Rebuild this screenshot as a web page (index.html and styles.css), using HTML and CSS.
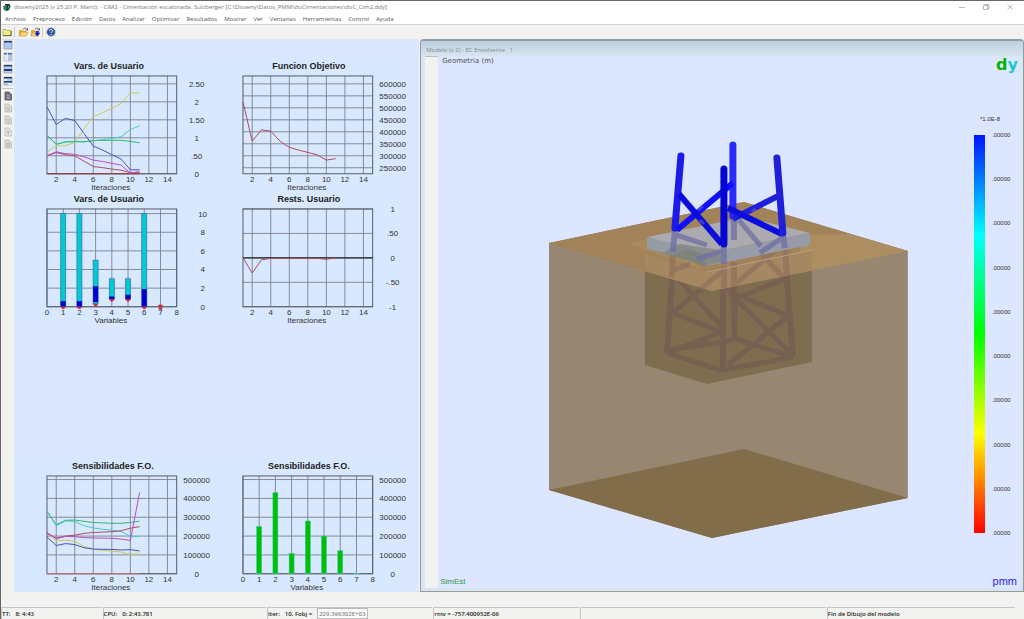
FILE: index.html
```html
<!DOCTYPE html>
<html lang="es">
  <head>
    <meta charset="UTF-8" />
    <meta name="viewport" content="width=device-width, initial-scale=1.0" />
    <title>disseny2025 - CIM2</title>
    <link rel="stylesheet" href="styles.css">
  </head>
  <body>
    <header class="title-bar">
      <svg class="app-icon" viewBox="0 0 10 10">
        <path d="M3 1l5 0 1 3-2 4-3 1-2-3z" fill="#234" />
        <path d="M1 4l3-2 1 4-2 3-2-2z" fill="#1a9a50" />
        <path d="M6 3l2 0-1 4z" fill="#3ac6a0" />
        <path d="M0 4l2-1 0 2z" fill="#d33" />
      </svg>
      <span class="title-text">disseny2025 (v 25.20 P. Martí): - CIM2 - Cimentación escalonada. Sulzberger [C:\Disseny\Datos_PMM\doCimentaciones\doC_Cim2.ddy]</span>
      <div class="window-controls">
        <button type="button" aria-label="Minimizar">
          <svg viewBox="0 0 8 8"><path d="M1 4.5h6" /></svg>
        </button>
        <button type="button" aria-label="Restaurar">
          <svg viewBox="0 0 8 8"><path d="M1.5 2.5h4v4h-4zM3 2.5v-1h4v4h-1.500" /></svg>
        </button>
        <button type="button" aria-label="Cerrar">
          <svg viewBox="0 0 8 8"><path d="M1.500 1.500l5 5M6.500 1.500l-5 5" /></svg>
        </button>
      </div>
    </header>

    <nav class="menu-bar">
      <button type="button">Archivo</button>
      <button type="button">Preproceso</button>
      <button type="button">Edición</button>
      <button type="button">Datos</button>
      <button type="button">Analizar</button>
      <button type="button">Optimizar</button>
      <button type="button">Resultados</button>
      <button type="button">Mostrar</button>
      <button type="button">Ver</button>
      <button type="button">Ventanas</button>
      <button type="button">Herramientas</button>
      <button type="button">Control</button>
      <button type="button">Ayuda</button>
    </nav>

    <div class="toolbar">
      <button type="button" aria-label="Nuevo">
        <svg viewBox="0 0 10 10">
          <path d="M1 2.500h3l1 1h4v5H1z" fill="#f3ee7c" stroke="#99964e" stroke-width=".7" />
          <path d="M1 8.700h8.300V4" fill="none" stroke="#444" stroke-width=".7" />
        </svg>
      </button>
      <span class="separator"></span>
      <button type="button" aria-label="Abrir">
        <svg viewBox="0 0 10 10">
          <path d="M1 3h3l1 1h3v5H1z" fill="#e8a93a" />
          <path d="M1 9l2-4h7L8 9z" fill="#ffd76a" stroke="#a87a25" stroke-width=".5" />
          <path d="M5 2.500c1-2 3-1.500 3.500 0M9.500 1v2H7.500" fill="none" stroke="#555" stroke-width=".9" />
        </svg>
      </button>
      <button type="button" aria-label="Guardar">
        <svg viewBox="0 0 10 10">
          <path d="M1 3h3l1 1h3v5H1z" fill="#e8a93a" />
          <path d="M1 9l2-4h7L8 9z" fill="#ffd76a" stroke="#a87a25" stroke-width=".5" />
          <path d="M5 2.500c1-2 3-1.500 3.500 0M9.500 1v2H7.500" fill="none" stroke="#555" stroke-width=".9" />
          <path d="M6 4h2.500v2H10L7.200 9.500 4.500 6H6z" fill="#1420e0" />
        </svg>
      </button>
      <span class="separator"></span>
      <button type="button" aria-label="Ayuda">
        <svg viewBox="0 0 10 10">
          <circle cx="5" cy="5" r="4.300" fill="#2f5596" stroke="#a9b7d0" stroke-width=".7" />
          <path d="M3.500 4c0-2 3-2 3 0 0 1-1.500 1-1.500 2M5 7v1" fill="none" stroke="#fff" />
        </svg>
      </button>
    </div>

    <main class="workspace">
      <div class="side-tools">
        <button type="button" aria-label="Una ventana">
          <svg viewBox="0 0 10 10"><path d="M1 1h8v8H1z" fill="#a9c8f3" stroke="#889" stroke-width=".6" /><path d="M1 1h8v1.500H1z" fill="#1f3f78" /></svg>
        </button>
        <button type="button" aria-label="Mosaico vertical">
          <svg viewBox="0 0 10 10"><path d="M1 1h8v8H1z" fill="#e9eaec" stroke="#aaa" stroke-width=".6" /><path d="M5 2h4v7H5z" fill="#a9c8f3" /><path d="M1 1h3v1.500H1zM5 1h4v1.500H5z" fill="#54719f" /></svg>
        </button>
        <button type="button" aria-label="Mosaico horizontal">
          <svg viewBox="0 0 10 10"><path d="M1 1h8v8H1z" fill="#b7d2f5" stroke="#889" stroke-width=".6" /><path d="M1 1h8v1.500H1zM1 5h8v2H1z" fill="#1f3f68" /></svg>
        </button>
        <button type="button" aria-label="Cascada">
          <svg viewBox="0 0 10 10"><path d="M1 1h8v8H1z" fill="#b7d2f5" stroke="#889" stroke-width=".6" /><path d="M1 1h8v1.500H1zM1 5h8v1.500H1z" fill="#1f3f68" /><path d="M1 3h3v2H1zM5 7h4v2H5z" fill="#eef" /></svg>
        </button>
        <span class="rule"></span>
        <button type="button" aria-label="Copiar">
          <svg viewBox="0 0 10 10"><path d="M2 1h4l2.500 2.500V9H2z" fill="#777385" stroke="#444" stroke-width=".7" /><path d="M3.500 4.500h3M3.500 6h3.500M3.500 7.500h3.500" stroke="#c5c3d0" stroke-width=".6" /></svg>
        </button>
        <button type="button" aria-label="Informe" disabled>
          <svg viewBox="0 0 10 10"><path d="M2 1h4l2.500 2.500V9H2z" fill="#dcdcda" stroke="#aaa" stroke-width=".6" /><path d="M3.500 4.500h3M3.500 6h3.500M3.500 7.500h3.500" stroke="#aaa" stroke-width=".6" /></svg>
        </button>
        <button type="button" aria-label="Lista" disabled>
          <svg viewBox="0 0 10 10"><path d="M2 1h4l2.500 2.500V9H2z" fill="#dcdcda" stroke="#aaa" stroke-width=".6" /><path d="M3.500 4.500h3M3.500 6h3.500M3.500 7.500h3.500" stroke="#aaa" stroke-width=".6" /></svg>
        </button>
        <button type="button" aria-label="Exportar" disabled>
          <svg viewBox="0 0 10 10"><path d="M2 1h4l2.500 2.500V9H2z" fill="#e6e6e4" stroke="#aaa" stroke-width=".6" /><path d="M5.200 8V4M3.700 5.200L5.200 3.700l1.500 1.500" fill="none" stroke="#999" stroke-width=".7" /></svg>
        </button>
        <button type="button" aria-label="Configurar" disabled>
          <svg viewBox="0 0 10 10"><path d="M2 1h4l2.500 2.500V9H2z" fill="#dcdcda" stroke="#aaa" stroke-width=".6" /><circle cx="5.200" cy="5.800" r="1.500" fill="none" stroke="#999" stroke-width=".8" /></svg>
        </button>
      </div>

      <section class="charts-pane">
        <div class="chart-group">
          <svg class="chart" id="userVarsHistory"></svg>
          <svg class="chart" id="objective"></svg>
          <svg class="chart" id="userVarsBars"></svg>
          <svg class="chart" id="constraints"></svg>
        </div>
        <div class="chart-group">
          <svg class="chart" id="sensHistory"></svg>
          <svg class="chart" id="sensBars"></svg>
        </div>
      </section>

      <section class="model-window">
        <h2 class="model-title">Modelo (v 2) - EC Envolvente &nbsp;&nbsp;1</h2>
        <div class="model-body">
          <div class="model-gutter"></div>
          <div class="stage">
            <div class="stage-top">
              <span class="caption">Geometria (m)</span>
              <span class="logo">d<span>y</span></span>
            </div>
            <div class="stage-middle">
              <svg class="model" viewBox="438 76 520 496" role="img" aria-label="Cimentación escalonada">
                <!-- terrain block -->
                <path d="M549 243L744 202 908 251V498L712 538 549 490z" fill="#978672" />
                <path d="M549 490L744 449 908 498 712 538z" fill="#826d4a" />
                <!-- buried footing -->
                <path d="M645 265H812V362L707 384 645 365z" fill="#7e6d4f" />
                <g class="buried">
                  <path class="leg" d="M673 270L667 353M723 280V370M734 280L735 337M786 265L793 355" />
                  <path d="M673 273L722 327M673 312L722 273M673 313L722 332M667 353L722 332M667 353L723 371M670 350L733 340" />
                  <path d="M733 338L793 357M723 370L793 357M728 365L787 317M730 293L790 352M730 292L787 315M740 297L787 278M727 290L760 262" />
                </g>
                <!-- ground surface -->
                <path d="M549 243L744 202 908 251 712 291z" fill="#a18259" />
                <path d="M800 235L850 234 908 251 800 273z" fill="#ad8e60" />
                <path d="M628 244L665 234 705 272 690 265z" fill="#a88a5c" />
                <path d="M645 254L707 273 812 250V270L712 291 645 271z" fill="#a58761" />
                <g class="surface-shadow">
                  <path class="leg" d="M673 254L672 277M724 266V288M734 262V286M785 245L787 275" />
                  <path d="M673 270L690 264M700 289L722 272M737 283L787 240M760 252L783 277" />
                </g>
                <path d="M707 272L812 250" stroke="#b8a28a" stroke-width="1" />
                <!-- slab -->
                <path d="M647 237L747 217 810 233 704 254z" fill="#abaaae" />
                <path d="M647 237L704 254 707 266 647 249z" fill="#828780" />
                <path d="M647 237L690 248 675 255 647 249z" fill="#949da4" />
                <path d="M704 254L810 233V245L707 266z" fill="#989ba8" />
                <path d="M664 252L680 244 720 250 722 262 704 266z" fill="#7d827e" opacity=".7" />
                <g class="slab-shadow">
                  <path class="leg" d="M675 230L673 252M724 246V264M734 218V240M783 234L785 248" />
                  <path d="M677 235L707 245M697 259L722 251M739 220L761 246M760 253L785 236" />
                </g>
                <!-- jacket above ground -->
                <path class="tube back" d="M733 145V216" />
                <path class="tube left" d="M681 156L675 228" />
                <path class="brace light" d="M677 230L733 183" />
                <path class="brace dark" d="M679 194L722 244" />
                <path class="brace right" d="M778 196L733 219" />
                <path class="brace dark" d="M728 208L782 234" />
                <path class="tube right" d="M777 158L783 233" />
                <path class="tube front" d="M724 169V244" />
                <path d="M698 210l5-4M700 220l4 4M752 211l4-2" stroke="#6a6ad2" stroke-width="3" opacity=".5" />
              </svg>
              <div class="legend">
                <div class="legend-title">*1.0E-8</div>
                <div class="legend-scale">
                  <div class="legend-bar"></div>
                  <div class="legend-values">
                    <span>.00000</span>
                    <span>.00000</span>
                    <span>.00000</span>
                    <span>.00000</span>
                    <span>.00000</span>
                    <span>.00000</span>
                    <span>.00000</span>
                    <span>.00000</span>
                    <span>.00000</span>
                    <span>.00000</span>
                  </div>
                </div>
              </div>
            </div>
            <div class="stage-bottom">
              <span class="simest">SimEst</span>
              <span class="pmm">pmm</span>
            </div>
          </div>
        </div>
      </section>
    </main>

    <footer class="status-bar">
      <div class="status-cell"><span>TT:</span><span>8: 4:43</span></div>
      <div class="status-cell"><span>CPU:</span><span>0: 2:43.781</span></div>
      <div class="status-cell"><span>Iter:</span><span>10, Fobj =</span><output>229.396302E+03</output></div>
      <div class="status-cell">rmv = -757.400952E-06</div>
      <div class="status-cell"></div>
      <div class="status-cell">Fin de Dibujo del modelo</div>
    </footer>

    <script>
      // Plot frame inside each chart's viewBox
      const FRAME = { left: 19, top: 19, width: 130, height: 98 };

      const COLORS = {
        blue: "#4a50b4",
        yellow: "#c9cb58",
        cyan: "#45cbd0",
        green: "#35b865",
        magenta: "#bd4cc4",
        red: "#b04a5c",
      };

      function drawChart(id, cfg) {
        const svg = document.getElementById(id);
        const right = FRAME.left + FRAME.width;
        const bottom = FRAME.top + FRAME.height;
        const titleX = cfg.titleX || 85;
        const labelX = cfg.labelX || 169;
        const px = (x) =>
          FRAME.left + ((x - cfg.xMin) / (cfg.xMax - cfg.xMin)) * FRAME.width;
        const py = (y) =>
          bottom - ((y - cfg.yMin) / (cfg.yMax - cfg.yMin)) * FRAME.height;
        const rect = (x, lo, hi, w, cls) =>
          `<rect class="${cls}" x="${px(x) - w / 2}" y="${py(hi)}" width="${w}" height="${py(lo) - py(hi)}" />`;

        let out = `<text class="chart-title" x="${titleX}" y="12">${cfg.title}</text>`;

        // Grid and axis labels
        cfg.xTicks.forEach((x) => {
          out += `<path class="grid" d="M${px(x)} ${FRAME.top}V${bottom}" />`;
          out += `<text x="${px(x)}" y="${bottom + 8}">${x}</text>`;
        });
        cfg.yTicks.forEach(([y, label]) => {
          out += `<path class="grid" d="M${FRAME.left} ${py(y)}H${right}" />`;
          out += `<text x="${labelX}" y="${py(y) + 3}">${label}</text>`;
        });
        out += `<rect class="frame" x="${FRAME.left}" y="${FRAME.top}" width="${FRAME.width}" height="${FRAME.height}" />`;
        out += `<text x="83" y="${bottom + 16}">${cfg.xLabel}</text>`;
        if (cfg.zeroLine) {
          out += `<path class="zero" d="M${FRAME.left} ${py(0)}H${right}" />`;
        }

        // Iteration histories start at iteration 1
        (cfg.series || []).forEach(([color, values]) => {
          const points = values.map((v, i) => `${px(i + 1)},${py(v)}`).join(" ");
          out += `<polyline points="${points}" stroke="${COLORS[color] || color}" />`;
        });

        // Ranges: variable, lower bound, upper bound, start and end of current value
        (cfg.ranges || []).forEach(([x, lo, hi, from, to]) => {
          if (hi > lo) {
            out += rect(x, lo, hi, 5, "range");
            out += rect(x, from, to, 5, "value");
          }
          const y = py(lo);
          out += `<path class="mark" d="M${px(x) - 2} ${y}h4l-1 2h-2z" />`;
        });

        (cfg.bars || []).forEach((value, i) => {
          out += rect(i + 1, 0, value, 5, "bar");
        });

        svg.setAttribute("viewBox", "0 0 196 133");
        svg.innerHTML = out;
      }

      const iterations = {
        xMin: 1,
        xMax: 15,
        xTicks: [2, 4, 6, 8, 10, 12, 14],
        xLabel: "Iteraciones",
      };
      const variables = {
        xMin: 0,
        xMax: 8,
        xTicks: [0, 1, 2, 3, 4, 5, 6, 7, 8],
        xLabel: "Variables",
      };
      const sensTicks = [0, 100, 200, 300, 400, 500].map((v) => [v, v ? v + "000" : "0"]);

      drawChart("userVarsHistory", {
        ...iterations,
        title: "Vars. de Usuario",
        titleX: 81,
        yMin: 0,
        yMax: 2.72,
        yTicks: [[0, "0"], [0.5, ".50"], [1, "1"], [1.5, "1.50"], [2, "2"], [2.5, "2.50"]],
        series: [
          ["#a03038", [0, 0, 0, 0, 0, 0, 0, 0, 0, 0, 0]],
          ["yellow", [0.6, 0.78, 0.78, 0.87, 1.25, 1.58, 1.7, 1.82, 1.95, 2.25, 2.25]],
          ["cyan", [1.07, 0.82, 0.9, 0.9, 0.89, 0.92, 0.95, 0.98, 1.03, 1.23, 1.33]],
          ["green", [1.07, 0.82, 0.88, 0.89, 0.89, 0.92, 0.93, 0.93, 0.93, 0.9, 0.86]],
          ["red", [0.5, 0.59, 0.53, 0.5, 0.35, 0.2, 0.17, 0.13, 0.1, 0.03, 0.03]],
          ["magenta", [0.5, 0.61, 0.56, 0.54, 0.47, 0.38, 0.34, 0.29, 0.24, 0.02, 0.06]],
          ["blue", [1.86, 1.37, 1.54, 1.48, 1.12, 0.77, 0.66, 0.53, 0.41, 0.11, 0.11]],
        ],
      });

      drawChart("objective", {
        ...iterations,
        title: "Funcion Objetivo",
        yMin: 225,
        yMax: 633,
        yTicks: [250, 300, 350, 400, 450, 500, 550, 600].map((v) => [v, v + "000"]),
        series: [["red", [525, 361, 408, 403, 361, 335, 324, 314, 304, 282, 288]]],
      });

      drawChart("userVarsBars", {
        ...variables,
        title: "Vars. de Usuario",
        titleX: 81,
        labelX: 175,
        yMin: 0,
        yMax: 10.5,
        yTicks: [0, 2, 4, 6, 8, 10].map((v) => [v, v]),
        ranges: [
          [1, 0, 10, 0, 0.6],
          [2, 0, 10, 0, 0.6],
          [3, 0.3, 5, 0.5, 2.2],
          [4, 0.8, 3, 0.8, 1.1],
          [5, 0.8, 3, 0.8, 1.3],
          [6, 0, 10, 0, 1.9],
          [7, 0.2, 0.2, 0, 0],
          [7, -0.1, -0.1, 0, 0],
        ],
      });

      drawChart("constraints", {
        ...iterations,
        title: "Rests. Usuario",
        yMin: -1,
        yMax: 1,
        yTicks: [[-1, "-1"], [-0.5, "-.50"], [0, "0"], [0.5, ".50"], [1, "1"]],
        zeroLine: true,
        series: [["red", [0, -0.31, -0.04, -0.01, -0.01, -0.01, -0.01, -0.01, -0.01, -0.03, 0]]],
      });

      drawChart("sensHistory", {
        ...iterations,
        title: "Sensibilidades F.O.",
        yMin: 0,
        yMax: 519,
        yTicks: sensTicks,
        series: [
          ["#d2707a", [0, 0, 0, 0, 0, 0, 0, 0, 0, 0, 0]],
          ["yellow", [215, 175, 178, 172, 145, 132, 123, 120, 115, 103, 105]],
          ["cyan", [335, 255, 280, 278, 255, 243, 236, 231, 225, 198, 198]],
          ["green", [330, 260, 284, 285, 278, 272, 270, 268, 268, 272, 279]],
          ["red", [215, 189, 200, 205, 214, 219, 221, 223, 228, 242, 250]],
          ["magenta", [220, 185, 198, 197, 192, 190, 189, 188, 184, 177, 432]],
          ["blue", [195, 150, 160, 155, 138, 131, 130, 129, 126, 128, 121]],
        ],
      });

      drawChart("sensBars", {
        ...variables,
        title: "Sensibilidades F.O.",
        yMin: 0,
        yMax: 519,
        yTicks: sensTicks,
        bars: [250, 430, 107, 280, 200, 122, 1],
      });
    </script>
  </body>
</html>
```
FILE: styles.css
```css
* {
  box-sizing: border-box;
}
body {
  display: flex;
  flex-direction: column;
  height: 100vh;
  margin: 0;
  overflow: hidden;
  border-top: 1px solid #666;
  border-left: 1px solid #666;
  background-color: #f2f2f0;
  color: #333;
  font-family: "Open Sans", "Noto Sans", sans-serif;
  font-size: 6px;
}
button {
  display: flex;
  align-items: center;
  padding: 0;
  border: none;
  background: none;
  color: inherit;
  font: inherit;
}

/* Title and menu */
.title-bar {
  display: flex;
  align-items: center;
  height: 12px;
  background-color: #fff;
  color: #777;
}
.app-icon {
  width: 10px;
  height: 9px;
  margin: 0 2px 0 1px;
}
.title-text {
  flex: 1;
  white-space: nowrap;
}
.window-controls {
  display: flex;
  gap: 16px;
  padding-right: 10px;
}
.window-controls svg {
  width: 8px;
  height: 8px;
  fill: none;
  stroke: #999;
  stroke-width: 0.7;
}
.menu-bar {
  display: flex;
  align-items: center;
  gap: 7px;
  height: 12px;
  padding-left: 4px;
  border-bottom: 1px solid #d4d4d4;
  background-color: #fff;
  color: #555;
}
.toolbar {
  display: flex;
  align-items: center;
  height: 13px;
  padding-left: 1px;
  gap: 2px;
}
.toolbar svg,
.side-tools svg {
  width: 10px;
  height: 10px;
}
.separator {
  width: 1px;
  height: 10px;
  margin-right: 1px;
  background-color: #ccc;
}

/* Work area */
.workspace {
  display: flex;
  flex: 1;
  min-height: 0;
  padding-top: 1px;
}
.side-tools {
  display: flex;
  flex-direction: column;
  align-items: center;
  gap: 2px;
  width: 13px;
  padding: 0 1px;
  border-top: 1px solid #ddd;
}
.rule {
  width: 100%;
  height: 1px;
  background-color: #c4c4c4;
}
.charts-pane {
  display: flex;
  flex: 406;
  flex-direction: column;
  justify-content: space-between;
  padding: 18px 0 2px;
  background-color: #dce6ff;
}
.chart-group {
  display: grid;
  grid-template-columns: 1fr 1fr;
  padding-left: 14px;
  background: linear-gradient(to right, #d8e9ff 94%, #dce6ff 98%);
}
.chart {
  display: block;
  width: 100%;
  height: auto;
  overflow: visible;
  fill: none;
  font-family: "Liberation Sans", Arial, sans-serif;
}
.chart text {
  fill: #333;
  font-size: 8px;
  text-anchor: middle;
}
.chart .chart-title {
  fill: #222;
  font-size: 9px;
  font-weight: bold;
}
.chart .grid {
  stroke: #7c808c;
  stroke-width: 0.9;
}
.chart .frame {
  stroke: #555b68;
}
.chart .zero {
  stroke: #222;
  stroke-width: 1.4;
}
.chart .range {
  fill: #00cccc;
  stroke: #3b74c8;
  stroke-width: 0.8;
}
.chart .value {
  fill: #0000c8;
}
.chart .mark {
  fill: #c8283c;
  stroke: #c8283c;
  stroke-width: 0.5;
}
.chart .bar {
  fill: #00be00;
  stroke: #35c8b4;
  stroke-width: 0.6;
}

/* Model window */
.model-window {
  display: flex;
  flex: 603;
  flex-direction: column;
  margin-left: 1px;
  border: 1px solid #999;
  border-top: 2px solid #919da6;
  border-radius: 4px 4px 0 0;
  background-color: #d6e6f2;
}
.model-title {
  height: 15px;
  margin: 0;
  padding: 4px 5px 0;
  border-radius: 3px 3px 0 0;
  background: linear-gradient(#bccfdf, #d6e6f0);
  color: #888;
  font-size: 6px;
  font-weight: normal;
  line-height: 10px;
}
.model-body {
  display: flex;
  flex: 1;
  min-height: 0;
  padding: 0 3px 3px 4px;
}
.model-gutter {
  width: 13px;
  border-top: 1px solid #bbb;
  background-color: #f2f2f0;
}
.stage {
  display: flex;
  flex: 1;
  flex-direction: column;
  min-width: 0;
  background-color: #dce6ff;
  font-family: "Liberation Sans", Arial, sans-serif;
}
.stage-top {
  display: flex;
  justify-content: space-between;
  height: 20px;
  padding-left: 4px;
}
.caption {
  padding-top: 1px;
  color: #555;
  font-family: "DejaVu Sans", sans-serif;
  font-size: 7px;
}
.logo {
  padding-right: 2px;
  color: #00b400;
  font-family: "DejaVu Sans", sans-serif;
  font-size: 16px;
  font-weight: bold;
  line-height: 18px;
}
.logo span {
  color: #1ec8cd;
}
.stage-middle {
  display: flex;
  flex: 1;
  min-height: 0;
}
.model {
  flex: 1;
  min-width: 0;
  height: 100%;
  fill: none;
}
.legend {
  display: flex;
  flex-direction: column;
  width: 62px;
  padding: 38px 3px 34px 16px;
  font-size: 6px;
}
.legend-title {
  padding-left: 6px;
  line-height: 10px;
}
.legend-scale {
  display: flex;
  flex: 1;
  gap: 7px;
  margin-top: 2px;
}
.legend-bar {
  width: 11px;
  margin: 9px 0 5px;
  background: linear-gradient(#0014ff, #00ffff 25%, #00ff00 50%, #ffff00 75%, #ff0000);
}
.legend-values {
  display: flex;
  flex-direction: column;
  justify-content: space-between;
  padding-top: 4px;
  line-height: 10px;
}
.stage-bottom {
  display: flex;
  justify-content: space-between;
  height: 16px;
  padding: 0 3px 0 2px;
}
.simest {
  color: #2d9640;
  font-size: 8px;
  line-height: 20px;
}
.pmm {
  color: #2828e6;
  font-size: 11px;
  line-height: 18px;
}

/* Buried and visible parts of the jacket */
.buried,
.surface-shadow,
.slab-shadow {
  stroke-width: 5;
}
.buried {
  stroke: #775f51;
}
.surface-shadow {
  stroke: #916f5c;
  opacity: 0.7;
}
.slab-shadow {
  stroke: #7072a4;
  opacity: 0.8;
}
.leg {
  stroke-width: 6;
}
.tube {
  stroke-width: 7;
  stroke-linecap: round;
}
.brace {
  stroke-width: 6;
}
.back {
  stroke: #2a2aff;
}
.left {
  stroke: #1c1ce8;
}
.front {
  stroke: #0505d2;
}
.right {
  stroke: #2020d8;
}
.light {
  stroke: #1010ff;
}
.dark {
  stroke: #0c0cdc;
}

/* Status bar */
.status-bar {
  display: grid;
  grid-template-columns: 101fr 164fr 166fr 146fr 247fr 189fr 8px;
  gap: 1px;
  margin-top: 15px;
  color: #222;
  font-weight: 600;
}
.status-cell {
  display: flex;
  gap: 5px;
  height: 12px;
  min-width: 0;
  border-top: 1px solid #c4c4c4;
  border-left: 1px solid #c4c4c4;
  line-height: 12px;
  white-space: nowrap;
}
.status-cell output {
  padding: 0 2px 0 1px;
  border: 1px solid #bbb;
  background-color: #fafafa;
  color: #888;
  line-height: 10px;
}
```
